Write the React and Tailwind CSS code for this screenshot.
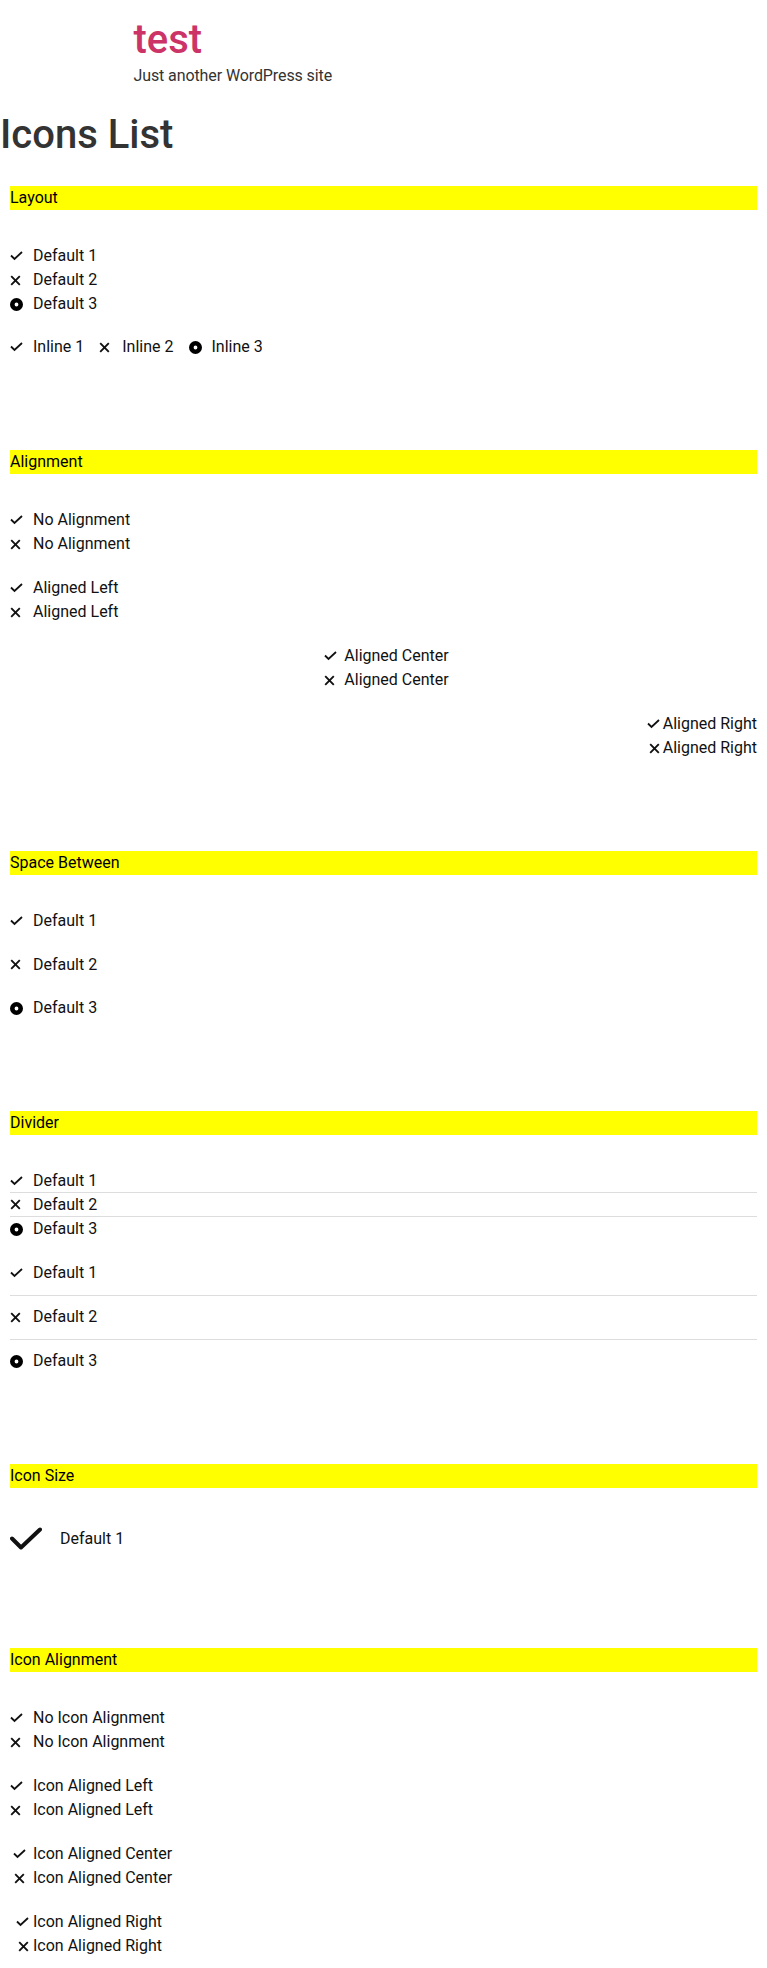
import React from 'react';

const Check = () => (
  <svg width="13" height="10" viewBox="0 0 13 10" className="shrink-0">
    <polyline points="1,4.5 4.5,8 12,1" fill="none" stroke="#111" strokeWidth="1.8" />
  </svg>
);

const Times = () => (
  <svg width="11" height="11" viewBox="0 0 11 11" className="shrink-0">
    <path d="M1.2 1.2 L9.8 9.8 M9.8 1.2 L1.2 9.8" stroke="#111" strokeWidth="1.9" />
  </svg>
);

const Dot = () => (
  <svg width="13" height="13" viewBox="0 0 13 13" className="shrink-0">
    <circle cx="6.5" cy="6.5" r="4.2" fill="none" stroke="#000" strokeWidth="4.6" />
  </svg>
);

const BigCheck = () => (
  <svg width="32" height="24" viewBox="0 0 32 24" className="shrink-0">
    <polyline points="2,11.5 11,20.5 30,2.5" fill="none" stroke="#111" strokeWidth="4" strokeLinecap="round" strokeLinejoin="round" />
  </svg>
);

function Item({ icon, label, box = 'w-[19px]', align = 'justify-start', pad = 'pl-[4px]', h = 'h-6', extra = '' }) {
  return (
    <div className={`flex items-center ${h} ${extra}`}>
      <span className={`flex ${align} items-center ${box} shrink-0`}>{icon}</span>
      <span className={`${pad} text-base leading-6 text-[#111] whitespace-nowrap`}>{label}</span>
    </div>
  );
}

function Bar({ title, className = '' }) {
  return <div className={`h-6 bg-[#ffff00] text-base leading-6 text-black ${className}`}>{title}</div>;
}

const three = [
  [<Check />, 'Default 1'],
  [<Times />, 'Default 2'],
  [<Dot />, 'Default 3'],
];

export default function App() {
  return (
    <div className="min-h-[1968px] bg-white font-['Roboto',sans-serif] text-[#333]">
      {/* Site header */}
      <header className="max-w-[500px] mx-auto py-4">
        <h1 className="text-[40px] leading-[48px] font-medium text-[#cc3366]">test</h1>
        <p className="text-base leading-6 text-[#333] tracking-[-0.1px]">Just another WordPress site</p>
      </header>

      <h1 className="mt-[7px] text-[40px] leading-[48px] font-medium text-[#333]">Icons List</h1>

      <div className="px-[10px] pb-[10px]">
        {/* Layout */}
        <Bar title="Layout" className="mt-[27px]" />
        <div className="mt-[34px] flex flex-col gap-[19px]">
          <div>
            {three.map(([ic, l]) => <Item key={l} icon={ic} label={l} />)}
          </div>
          <div className="flex gap-[15px]">
            <Item icon={<Check />} label="Inline 1" />
            <Item icon={<Times />} label="Inline 2" />
            <Item icon={<Dot />} label="Inline 3" />
          </div>
        </div>

        {/* Alignment */}
        <Bar title="Alignment" className="mt-[91px]" />
        <div className="mt-[34px] flex flex-col gap-5">
          <div>
            <Item icon={<Check />} label="No Alignment" />
            <Item icon={<Times />} label="No Alignment" />
          </div>
          <div>
            <Item icon={<Check />} label="Aligned Left" />
            <Item icon={<Times />} label="Aligned Left" />
          </div>
          <div className="flex flex-col items-center pl-[6px]">
            <Item icon={<Check />} label="Aligned Center" box="w-[16px]" />
            <Item icon={<Times />} label="Aligned Center" box="w-[16px]" />
          </div>
          <div className="flex flex-col items-end">
            <Item icon={<Check />} label="Aligned Right" box="w-[13px]" pad="pl-[3px]" />
            <Item icon={<Times />} label="Aligned Right" box="w-[13px]" align="justify-end" pad="pl-[3px]" />
          </div>
        </div>

        {/* Space Between */}
        <Bar title="Space Between" className="mt-[91px]" />
        <div className="mt-[34px] flex flex-col gap-[19.5px]">
          {three.map(([ic, l]) => <Item key={l} icon={ic} label={l} />)}
        </div>

        {/* Divider */}
        <Bar title="Divider" className="mt-[91px]" />
        <div className="mt-[34px] flex flex-col gap-5">
          <div>
            <Item icon={<Check />} label="Default 1" h="h-[23px]" extra="box-content border-b border-[#dddddd]" />
            <Item icon={<Times />} label="Default 2" h="h-[23px]" extra="box-content border-b border-[#dddddd]" />
            <Item icon={<Dot />} label="Default 3" />
          </div>
          <div>
            <Item icon={<Check />} label="Default 1" extra="box-content pb-[10px] border-b border-[#dddddd]" />
            <Item icon={<Times />} label="Default 2" extra="box-content pt-[9px] pb-[10px] border-b border-[#dddddd]" />
            <Item icon={<Dot />} label="Default 3" extra="box-content pt-[9px]" />
          </div>
        </div>

        {/* Icon Size */}
        <Bar title="Icon Size" className="mt-[91px]" />
        <div className="mt-[34px]">
          <Item icon={<BigCheck />} label="Default 1" box="w-[46px]" h="h-[34px]" />
        </div>

        {/* Icon Alignment */}
        <Bar title="Icon Alignment" className="mt-[92px]" />
        <div className="mt-[34px] flex flex-col gap-5">
          <div>
            <Item icon={<Check />} label="No Icon Alignment" />
            <Item icon={<Times />} label="No Icon Alignment" />
          </div>
          <div>
            <Item icon={<Check />} label="Icon Aligned Left" />
            <Item icon={<Times />} label="Icon Aligned Left" />
          </div>
          <div>
            <Item icon={<Check />} label="Icon Aligned Center" align="justify-center" />
            <Item icon={<Times />} label="Icon Aligned Center" align="justify-center" />
          </div>
          <div>
            <Item icon={<Check />} label="Icon Aligned Right" align="justify-end" />
            <Item icon={<Times />} label="Icon Aligned Right" align="justify-end" />
          </div>
        </div>
      </div>
    </div>
  );
}
